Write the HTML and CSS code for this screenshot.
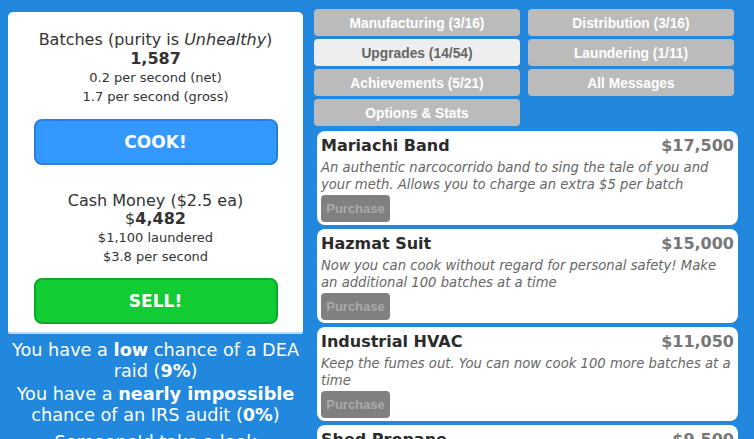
FILE: index.html
```html
<!DOCTYPE html>
<html>
<head>
<meta charset="utf-8">
<link rel="stylesheet" href="styles.css">
</head>
<body>
<div class="page">
  <div class="left">
    <div class="panel">
      <div class="stat">
        <div class="stat-title">Batches (purity is <i>Unhealthy</i>)</div>
        <div class="stat-value">1,587</div>
        <div class="stat-sub">0.2 per second (net)</div>
        <div class="stat-sub">1.7 per second (gross)</div>
      </div>
      <button class="big-btn cook">COOK!</button>
      <div class="stat cash">
        <div class="stat-title">Cash Money ($2.5 ea)</div>
        <div class="stat-value"><span class="plain">$</span>4,482</div>
        <div class="stat-sub">$1,100 laundered</div>
        <div class="stat-sub">$3.8 per second</div>
      </div>
      <button class="big-btn sell">SELL!</button>
    </div>
    <div class="risk">
      <p>You have a <b>low</b> chance of a DEA raid (<b>9%</b>)</p>
      <p>You have a <b>nearly impossible</b> chance of an IRS audit (<b>0%</b>)</p>
      <p class="more">Someone'd take a look</p>
    </div>
  </div>
  <div class="right">
    <div class="tabs">
      <div class="tab">Manufacturing (3/16)</div>
      <div class="tab">Distribution (3/16)</div>
      <div class="tab active">Upgrades (14/54)</div>
      <div class="tab">Laundering (1/11)</div>
      <div class="tab">Achievements (5/21)</div>
      <div class="tab">All Messages</div>
      <div class="tab">Options &amp; Stats</div>
    </div>
    <div class="cards">
      <div class="card">
        <div class="card-head"><span class="name">Mariachi Band</span><span class="price">$17,500</span></div>
        <div class="desc">An authentic narcocorrido band to sing the tale of you and your meth. Allows you to charge an extra $5 per batch</div>
        <button class="buy">Purchase</button>
      </div>
      <div class="card">
        <div class="card-head"><span class="name">Hazmat Suit</span><span class="price">$15,000</span></div>
        <div class="desc">Now you can cook without regard for personal safety! Make an additional 100 batches at a time</div>
        <button class="buy">Purchase</button>
      </div>
      <div class="card">
        <div class="card-head"><span class="name">Industrial HVAC</span><span class="price">$11,050</span></div>
        <div class="desc">Keep the fumes out. You can now cook 100 more batches at a time</div>
        <button class="buy">Purchase</button>
      </div>
      <div class="card">
        <div class="card-head"><span class="name">Shed Propane</span><span class="price">$9,500</span></div>
        <div class="desc">More propane for a bigger cook</div>
        <button class="buy">Purchase</button>
      </div>
    </div>
  </div>
</div>
</body>
</html>
```
FILE: styles.css
```css
html, body {
  margin: 0;
  padding: 0;
  height: 100%;
  overflow: hidden;
}
body {
  background: #2288dd;
  font-family: "DejaVu Sans", Verdana, sans-serif;
  color: #333;
}
.page {
  display: flex;
  align-items: flex-start;
  padding: 9px 0 0 8px;
}
.left {
  width: 295px;
  flex: none;
}
.panel {
  margin-top: 3px;
  background: #fff;
  border-radius: 5px 5px 2px 2px;
  box-shadow: 0 2px 0 #c9d6e6;
  padding: 18px 0 8px;
  display: flex;
  flex-direction: column;
  align-items: center;
}
.stat {
  text-align: center;
}
.stat-title {
  font-size: 16px;
  line-height: 19px;
}
.stat-value {
  font-size: 16px;
  line-height: 19px;
  font-weight: bold;
}
.stat-value .plain {
  font-weight: normal;
}
.stat-sub {
  font-size: 13px;
  line-height: 19px;
}
.big-btn {
  display: block;
  width: 244px;
  height: 46px;
  margin-top: 13px;
  border-radius: 8px;
  font-family: "DejaVu Sans", Verdana, sans-serif;
  font-weight: bold;
  font-size: 17px;
  color: #fff;
  cursor: pointer;
}
.cook {
  background: #3399ff;
  border: 2px solid #2a7de1;
}
.sell {
  background: #11cc33;
  border: 2px solid #0ea82a;
  margin-top: 12px;
}
.cash {
  margin-top: 26px;
}
.cash .stat-value {
  margin-top: -1px;
}
.risk {
  color: #fff;
  text-align: center;
  font-size: 17.7px;
  line-height: 21px;
  margin-top: 8px;
  margin-left: -4px;
  margin-right: -4px;
}
.risk p {
  margin: 0 0 2px;
}
.risk p.more {
  margin-top: 6px;
}
.right {
  margin-left: 11px;
  width: 424px;
  flex: none;
}
.tabs {
  display: grid;
  grid-template-columns: 206px 206px;
  column-gap: 8px;
  row-gap: 3px;
}
.tab {
  height: 27px;
  background: #bbbbbb;
  border-radius: 4px;
  color: #fff;
  font-family: "Liberation Sans", Arial, sans-serif;
  font-weight: bold;
  font-size: 13.8px;
  padding-top: 1px;
  box-sizing: border-box;
  display: flex;
  align-items: center;
  justify-content: center;
}
.tab.active {
  background: #eeeeee;
  color: #666;
}
.cards {
  margin-top: 5px;
  margin-left: 3px;
  display: flex;
  flex-direction: column;
  gap: 4px;
}
.card {
  background: #fff;
  border-radius: 8px;
  padding: 5px 4px 3px;
}
.card-head {
  display: flex;
  justify-content: space-between;
  font-weight: bold;
  font-size: 16px;
  line-height: 20px;
}
.name {
  color: #2b2b2b;
}
.price {
  color: #777;
}
.desc {
  font-style: italic;
  font-size: 13.2px;
  line-height: 17px;
  color: #666;
  margin-top: 3px;
}
.buy {
  margin-top: 2px;
  display: block;
  width: 69px;
  height: 27px;
  background: #808080;
  border: none;
  border-radius: 4px;
  color: #aaaaaa;
  font-family: "Liberation Sans", Arial, sans-serif;
  font-weight: bold;
  font-size: 13px;
  padding: 0;
}
```
